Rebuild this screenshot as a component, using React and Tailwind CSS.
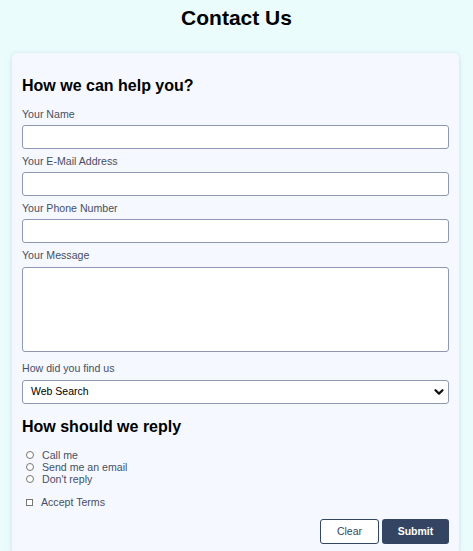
import React, { useState } from 'react';

const fields = [
  { id: 'name', label: 'Your Name', type: 'text' },
  { id: 'email', label: 'Your E-Mail Address', type: 'email' },
  { id: 'phone', label: 'Your Phone Number', type: 'tel' },
];

const replyOptions = [
  { value: 'call', label: 'Call me' },
  { value: 'email', label: 'Send me an email' },
  { value: 'none', label: "Don't reply" },
];

export default function App() {
  const [reply, setReply] = useState('');
  const [terms, setTerms] = useState(false);

  const labelClass = 'block h-[12px] text-[10.6px] leading-[11px] text-[#474f63]';
  const inputClass =
    'block h-[24px] w-full rounded-[3px] border border-[#8e98b4] bg-white px-2 text-[10.5px] text-black outline-none';

  return (
    <div
      className="min-h-[551px] bg-[#ebfcfd] text-black"
      style={{ fontFamily: '"Liberation Sans", Arial, sans-serif' }}
    >
      <h1 className="h-[36px] text-center text-[21px] font-bold leading-[36px]">Contact Us</h1>

      <form
        onSubmit={(e) => e.preventDefault()}
        className="ml-[12px] mt-[17px] w-[447px] rounded-[5px] bg-[#f5f8fe] px-[10px] pb-[10px] pt-[23px] shadow-[0_1px_5px_rgba(120,170,180,0.35)]"
      >
        <h2 className="mb-[13px] h-[20px] text-[16px] font-bold leading-[20px]">How we can help you?</h2>

        {fields.map((f) => (
          <div key={f.id} className="mb-[7px]">
            <label htmlFor={f.id} className={labelClass}>
              {f.label}
            </label>
            <input id={f.id} type={f.type} className={'mt-[4px] ' + inputClass} />
          </div>
        ))}

        {/* Message */}
        <div className="mb-[11px]">
          <label htmlFor="message" className={labelClass}>
            Your Message
          </label>
          <textarea
            id="message"
            className="mt-[5px] block h-[85px] w-full resize-none rounded-[3px] border border-[#8e98b4] bg-white px-2 py-1 text-[10.5px] outline-none"
          />
        </div>

        {/* Found us */}
        <div className="mb-[13px]">
          <label htmlFor="found" className={labelClass}>
            How did you find us
          </label>
          <div className="relative mt-[5px]">
            <select
              id="found"
              defaultValue="web"
              className="block h-[24px] w-full appearance-none rounded-[3px] border border-[#8e98b4] bg-white pl-[8px] text-[10.5px] text-black outline-none"
            >
              <option value="web">Web Search</option>
              <option value="friend">Friend</option>
              <option value="ad">Advertisement</option>
            </select>
            <svg
              className="pointer-events-none absolute right-[5px] top-[8px] h-[8px] w-[10px]"
              viewBox="0 0 10 8"
              fill="none"
              stroke="#111"
              strokeWidth="2.2"
              strokeLinecap="round"
              strokeLinejoin="round"
            >
              <path d="M1.5 2.2 L5 5.6 L8.5 2.2" />
            </svg>
          </div>
        </div>

        <h2 className="mb-[12px] h-[20px] text-[16px] font-bold leading-[20px]">How should we reply</h2>

        <div className="mb-[11px]">
          {replyOptions.map((o) => (
            <label key={o.value} className="flex h-[12px] items-center text-[10.6px] leading-[12px] text-[#474f63]">
              <input
                type="radio"
                name="reply"
                value={o.value}
                checked={reply === o.value}
                onChange={() => setReply(o.value)}
                className="ml-[4px] mr-[8px] h-[8px] w-[8px] appearance-none rounded-full border border-[#767676] bg-white checked:border-[#344563] checked:bg-[#344563]"
              />
              {o.label}
            </label>
          ))}
        </div>

        <label className="flex h-[12px] items-center text-[10.6px] leading-[12px] text-[#474f63]">
          <input
            type="checkbox"
            checked={terms}
            onChange={(e) => setTerms(e.target.checked)}
            className="ml-[4px] mr-[8px] h-[7px] w-[7px] appearance-none border border-[#767676] bg-white checked:bg-[#344563]"
          />
          Accept Terms
        </label>

        <div className="mt-[11px] flex justify-end gap-[3px]">
          <button
            type="reset"
            className="h-[25px] w-[59px] rounded-[3px] border border-[#344563] bg-white text-[10.5px] text-[#344563]"
          >
            Clear
          </button>
          <button
            type="submit"
            className="h-[25px] w-[67px] rounded-[3px] bg-[#344563] text-[10.5px] font-bold text-white"
          >
            Submit
          </button>
        </div>
      </form>
    </div>
  );
}
